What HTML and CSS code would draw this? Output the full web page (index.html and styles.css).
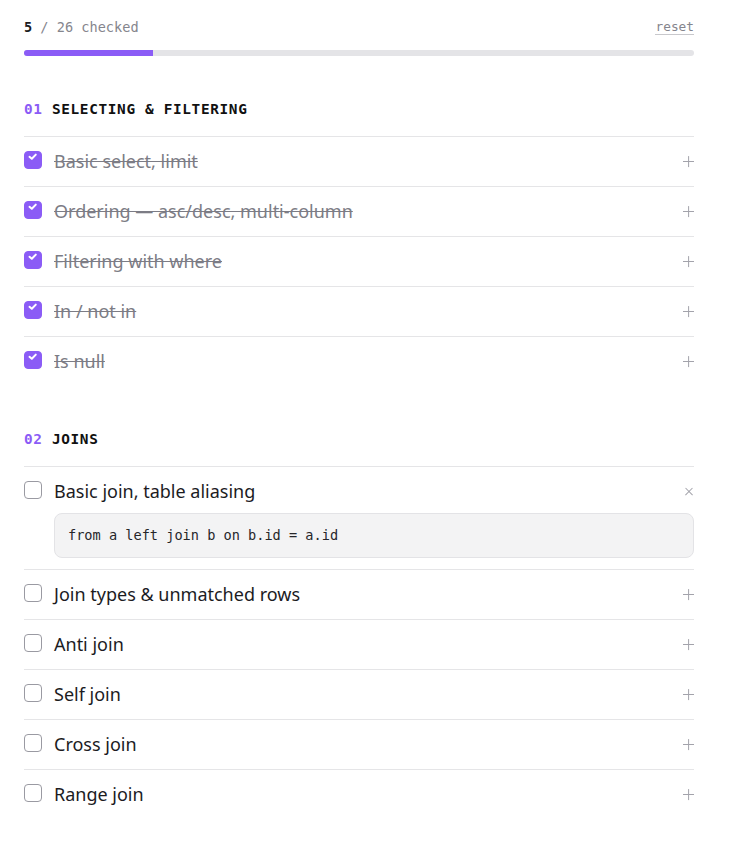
FILE: index.html
```html
<!DOCTYPE html>
<html lang="en">

<head>
    <meta charset="UTF-8">
    <meta name="viewport" content="width=device-width, initial-scale=1.0">
    <title>SQL checklist</title>
    <link rel="stylesheet" href="styles.css">
</head>

<body>
    <div class="container">
        <div class="status">
            <span class="count"><b>5</b> / 26 checked</span>
            <a class="reset" href="#">reset</a>
        </div>
        <div class="progress">
            <div class="progress-fill" style="width: 19.23%"></div>
        </div>

        <section class="section">
            <h2 class="section-title"><span class="num">01</span> SELECTING &amp; FILTERING</h2>
            <ul class="items">
                <li class="item done">
                    <div class="row">
                        <span class="box"><svg viewBox="0 0 18 18"><polyline points="5.5,5.8 7.8,7.8 11.8,3.6" /></svg></span>
                        <span class="label">Basic select, limit</span>
                        <span class="toggle plus"></span>
                    </div>
                </li>
                <li class="item done">
                    <div class="row">
                        <span class="box"><svg viewBox="0 0 18 18"><polyline points="5.5,5.8 7.8,7.8 11.8,3.6" /></svg></span>
                        <span class="label">Ordering — asc/desc, multi-column</span>
                        <span class="toggle plus"></span>
                    </div>
                </li>
                <li class="item done">
                    <div class="row">
                        <span class="box"><svg viewBox="0 0 18 18"><polyline points="5.5,5.8 7.8,7.8 11.8,3.6" /></svg></span>
                        <span class="label">Filtering with where</span>
                        <span class="toggle plus"></span>
                    </div>
                </li>
                <li class="item done">
                    <div class="row">
                        <span class="box"><svg viewBox="0 0 18 18"><polyline points="5.5,5.8 7.8,7.8 11.8,3.6" /></svg></span>
                        <span class="label">In / not in</span>
                        <span class="toggle plus"></span>
                    </div>
                </li>
                <li class="item done">
                    <div class="row">
                        <span class="box"><svg viewBox="0 0 18 18"><polyline points="5.5,5.8 7.8,7.8 11.8,3.6" /></svg></span>
                        <span class="label">Is null</span>
                        <span class="toggle plus"></span>
                    </div>
                </li>
            </ul>
        </section>

        <section class="section">
            <h2 class="section-title"><span class="num">02</span> JOINS</h2>
            <ul class="items">
                <li class="item open">
                    <div class="row">
                        <span class="box"></span>
                        <span class="label">Basic join, table aliasing</span>
                        <span class="toggle close"></span>
                    </div>
                    <pre class="code">from a left join b on b.id = a.id</pre>
                </li>
                <li class="item">
                    <div class="row">
                        <span class="box"></span>
                        <span class="label">Join types &amp; unmatched rows</span>
                        <span class="toggle plus"></span>
                    </div>
                </li>
                <li class="item">
                    <div class="row">
                        <span class="box"></span>
                        <span class="label">Anti join</span>
                        <span class="toggle plus"></span>
                    </div>
                </li>
                <li class="item">
                    <div class="row">
                        <span class="box"></span>
                        <span class="label">Self join</span>
                        <span class="toggle plus"></span>
                    </div>
                </li>
                <li class="item">
                    <div class="row">
                        <span class="box"></span>
                        <span class="label">Cross join</span>
                        <span class="toggle plus"></span>
                    </div>
                </li>
                <li class="item">
                    <div class="row">
                        <span class="box"></span>
                        <span class="label">Range join</span>
                        <span class="toggle plus"></span>
                    </div>
                </li>
            </ul>
        </section>
    </div>
</body>

</html>
```

FILE: styles.css
```css
body {
    margin: 0;
    background: #fff;
    font-family: "Noto Sans", sans-serif;
    color: #1c1c1f;
}

.container {
    max-width: 670px;
    padding: 18px 24px;
}

.status {
    display: flex;
    justify-content: space-between;
    align-items: center;
    height: 18px;
    font-family: "DejaVu Sans Mono", monospace;
    font-size: 13.6px;
    color: #85858d;
}

.count b {
    color: #1c1c1f;
}

.reset {
    font-size: 12.8px;
    color: #85858d;
    text-decoration: none;
    border-bottom: 1px solid #c8c8cc;
    line-height: 15px;
}

.progress {
    margin-top: 14px;
    height: 6px;
    background: #e4e4e7;
    border-radius: 3px;
    overflow: hidden;
}

.progress-fill {
    height: 100%;
    background: #8b5cf6;
}

.section {
    margin-top: 44px;
}

.section-title {
    margin: 0 0 18px;
    font-family: "DejaVu Sans Mono", monospace;
    font-size: 14.4px;
    line-height: 18px;
    font-weight: bold;
    letter-spacing: 0.045em;
    color: #111;
}

.num {
    color: #8b5cf6;
}

.items {
    list-style: none;
    margin: 0;
    padding: 0;
}

.item {
    padding: 12px 0;
    border-top: 1px solid #e5e5e7;
}

.open {
    padding-bottom: 11px;
}

.row {
    display: flex;
    align-items: flex-start;
    gap: 12px;
}

.box {
    flex: none;
    width: 18px;
    height: 18px;
    margin-top: 2px;
    box-sizing: border-box;
    border: 1.5px solid #9a9aa2;
    border-radius: 4px;
    background: #fff;
}

.done .box {
    border-color: #8b5cf6;
    background: #8b5cf6;
}

.box svg {
    display: block;
    width: 18px;
    height: 18px;
    margin: -1.5px 0 0 -1.5px;
    fill: none;
    stroke: #fff;
    stroke-width: 2;
    stroke-linecap: round;
    stroke-linejoin: round;
}

.label {
    flex: 1;
    font-size: 18px;
    line-height: 25px;
}

.done .label {
    color: #7c7c85;
    text-decoration: line-through;
}

.code {
    margin: 9px 0 0 30px;
    padding: 12px 13px;
    background: #f3f3f4;
    border: 1px solid #e3e3e6;
    border-radius: 8px;
    font-family: "DejaVu Sans Mono", monospace;
    font-size: 13.6px;
    line-height: 19px;
    color: #26262a;
}

.toggle {
    flex: none;
    position: relative;
    width: 11px;
    height: 25px;
}

.toggle::before,
.toggle::after {
    content: "";
    position: absolute;
    left: 0;
    top: 12px;
    width: 11px;
    height: 1.2px;
    background: #a3a3ab;
}

.plus::after {
    transform: rotate(90deg);
}

.close::before,
.close::after {
    left: 1px;
    width: 10px;
}

.close::before {
    transform: rotate(45deg);
}

.close::after {
    transform: rotate(-45deg);
}
```
